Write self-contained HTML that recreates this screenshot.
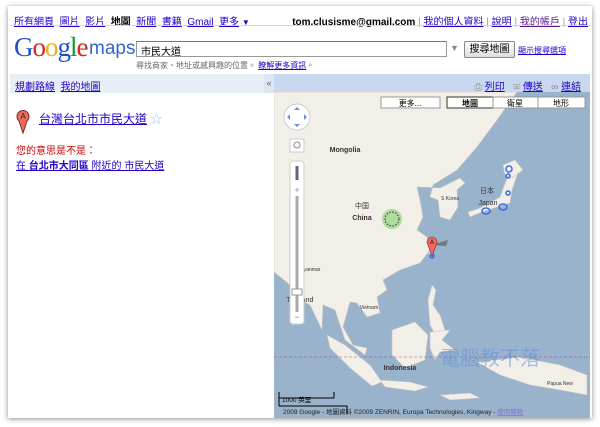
<!DOCTYPE html>
<html><head><meta charset="utf-8"><style>
*{margin:0;padding:0;box-sizing:border-box}
body{width:600px;height:427px;background:#fff;font-family:"Liberation Sans","Noto Sans CJK TC",sans-serif;position:relative;overflow:hidden}
#frame{position:absolute;left:8px;top:6px;width:584px;height:412px;background:#fff;box-shadow:0 1px 5px rgba(0,0,0,.45)}
a{color:#2200cc;text-decoration:underline}
.abs{position:absolute;white-space:nowrap}
.s{font-size:10px}
</style></head><body>
<div id="frame"></div>
<div class="abs s" style="left:14px;top:13px;">
<a>所有網頁</a>&nbsp; <a>圖片</a>&nbsp; <a>影片</a>&nbsp; <b>地圖</b>&nbsp; <a>新聞</a>&nbsp; <a>書籍</a>&nbsp; <a>Gmail</a>&nbsp; <a>更多</a> <span style="color:#2200cc;font-size:8px">▼</span></div>
<div class="abs s" style="right:12px;top:13px;"><b>tom.clusisme@gmail.com</b> <span style="color:#999">|</span> <a>我的個人資料</a> <span style="color:#999">|</span> <a>說明</a> <span style="color:#999">|</span> <a style="color:#551a8b">我的帳戶</a> <span style="color:#999">|</span> <a>登出</a></div>
<div class="abs" style="left:10px;top:25px;width:580px;height:1px;background:#c9d7f1"></div>
<div class="abs" style="left:14px;top:32px;font-family:'Liberation Serif',serif;font-size:27px;letter-spacing:-1px"><span style="color:#1a4fd6">G</span><span style="color:#d8261b">o</span><span style="color:#f1b01a">o</span><span style="color:#1a4fd6">g</span><span style="color:#139a35">l</span><span style="color:#d8261b">e</span></div>
<div class="abs" style="left:89px;top:38px;font-size:19px;color:#3366cc">maps</div>
<div class="abs" style="left:136px;top:41px;width:311px;height:16px;border:1px solid #999;border-top-color:#777;font-size:10px;padding:1px 4px">市民大道</div>
<div class="abs" style="left:450px;top:43px;font-size:9px;color:#888">▼</div>
<div class="abs" style="left:464px;top:41px;width:51px;height:17px;border:1px solid #888;background:linear-gradient(#fff,#ddd);font-size:10px;text-align:center;line-height:15px;border-radius:2px">搜尋地圖</div>
<div class="abs" style="left:518px;top:45px;font-size:8px"><a>顯示搜尋選項</a></div>
<div class="abs" style="left:136px;top:60px;font-size:8px;color:#666">尋找商家、地址或感興趣的位置。 <a>瞭解更多資訊</a>。</div>
<div class="abs" style="left:10px;top:74px;width:264px;height:19px;background:#e8eef8"></div>
<div class="abs" style="left:264px;top:74px;width:10px;height:19px;background:#dde6f4;font-size:9px;color:#666;line-height:18px;text-align:center">«</div>
<div class="abs" style="left:274px;top:74px;width:316px;height:18px;background:#c9d8ee"></div>
<div class="abs s" style="left:15px;top:78px"><a>規劃路線</a>&nbsp; <a>我的地圖</a></div>
<div class="abs s" style="left:474px;top:78px"><span style="color:#888">⎙</span> <a>列印</a>&nbsp;&nbsp; <span style="color:#888">✉</span> <a>傳送</a>&nbsp;&nbsp; <span style="color:#888">∞</span> <a>連結</a></div>
<svg class="abs" style="left:16px;top:108px" width="14" height="26" viewBox="0 0 14 26"><path d="M7 25 L3 13 A6 6 0 1 1 11 13Z" fill="#f06a5c" stroke="#7a2a22" stroke-width="1"/><text x="7" y="11" font-size="8" text-anchor="middle" fill="#222" font-family="Liberation Sans">A</text></svg>
<div class="abs" style="left:39px;top:110px;font-size:12px"><a>台灣台北市市民大道</a> <span style="color:#9bc2ec">☆</span></div>
<div class="abs s" style="left:16px;top:142px;color:#cc0000">您的意思是不是：</div>
<div class="abs s" style="left:16px;top:157px"><a>在 <b>台北市大同區</b> 附近的 市民大道</a></div>
<svg class="abs" style="left:274px;top:92px" width="316" height="326" viewBox="274 92 316 326">
<rect x="274" y="92" width="316" height="326" fill="#99b3cc"/>
<g fill="#f2efe9" stroke="#c8c4bc" stroke-width="0.6">
<path d="M274 92 L517 92 L497 120 L477 147 L457 170 L433 185 L430 197 L438 200 L440 217 L450 220 L458 207 L457 190 L465 183 L460 178 L440 188 L417 187 L420 200 L423 217 L417 230 L427 237 L430 250 L420 263 L400 270 L383 280 L387 290 L377 297 L380 313 L367 317 L357 303 L350 302 L343 327 L353 345 L367 348 L365 355 L345 340 L335 310 L323 305 L322 330 L310 305 L300 300 L290 285 L274 272Z"/>
<path d="M470 217 L482 212 L510 203 L512 190 L520 167 L510 170 L500 197 L480 208 L468 212Z"/>
<path d="M503 165 L515 160 L523 170 L512 178 L505 175Z"/>
<path d="M431 243 L434 246 L432 258 L429 254Z"/>
<path d="M432 285 L436 290 L433 305 L440 315 L445 330 L438 340 L430 325 L428 300Z"/>
<path d="M392 330 L415 322 L428 335 L425 360 L405 368 L392 355Z"/>
<path d="M327 335 L345 345 L370 365 L382 382 L372 386 L350 368 L330 348Z"/>
<path d="M380 380 L410 382 L428 387 L415 391 L385 387Z"/>
<path d="M430 332 L450 330 L442 340 L455 350 L440 352 L435 360 L430 348Z"/>
<path d="M477 362 L520 357 L560 365 L587 375 L587 395 L560 390 L530 385 L500 375Z"/>
<path d="M440 395 L470 393 L480 398 L450 400Z"/>
</g>
<line x1="274" y1="357" x2="590" y2="357" stroke="#a48" stroke-dasharray="3,2" stroke-width="0.6"/>
<circle cx="392" cy="219" r="10" fill="#9ed68c" opacity=".8"/><circle cx="392" cy="219" r="7" fill="none" stroke="#333" stroke-dasharray="1.5,1.5"/>
<path d="M430 245 L448 240 L446 246 Z" fill="#555" opacity=".6"/>
<path d="M432 257 L428 245 A5 5 0 1 1 436 245Z" fill="#f06a5c" stroke="#7a2a22" stroke-width=".6"/><text x="432" y="244" font-size="6" text-anchor="middle" font-family="Liberation Sans">A</text>
<g fill="none" stroke="#3c6ce8" stroke-width="1.5"><circle cx="509" cy="169" r="3"/><circle cx="508" cy="176" r="2"/><circle cx="508" cy="193" r="2"/><ellipse cx="486" cy="211" rx="4" ry="3"/><ellipse cx="503" cy="207" rx="4" ry="3"/><circle cx="432" cy="256" r="2"/></g>
<g font-family="Liberation Sans" font-size="7" font-weight="bold" fill="#333" text-anchor="middle"><text x="345" y="152">Mongolia</text><text x="362" y="220">China</text><text x="488" y="205" font-weight="normal">Japan</text><text x="400" y="370">Indonesia</text><text x="300" y="302" font-weight="normal">Thailand</text></g>
<g font-family="Liberation Sans,Noto Sans CJK TC" font-size="7" fill="#333" text-anchor="middle"><text x="362" y="208">中国</text><text x="487" y="193">日本</text><text x="450" y="200" font-size="5">S Korea</text><text x="310" y="271" font-size="5">Myanmar</text><text x="560" y="385" font-size="5">Papua New</text><text x="369" y="309" font-size="5">Vietnam</text></g>
<g fill="#fff" stroke="#999"><rect x="381" y="97" width="59" height="11"/><rect x="447" y="97" width="46" height="11" stroke="#333"/><rect x="493" y="97" width="45" height="11"/><rect x="538" y="97" width="47" height="11"/></g>
<g font-family="Liberation Sans,Noto Sans CJK TC" font-size="8" text-anchor="middle" fill="#000"><text x="410" y="106">更多...</text><text x="470" y="106" font-weight="bold">地圖</text><text x="515" y="106">衛星</text><text x="561" y="106">地形</text></g>
<circle cx="297" cy="117" r="13" fill="#fff" stroke="#ccc"/>
<path d="M297 107 l-3 3 h6z M297 127 l-3 -3 h6z M287 117 l3 -3 v6z M307 117 l-3 -3 v6z" fill="#6d8ee0"/>
<rect x="290" y="139" width="14" height="13" fill="#fff" stroke="#ccc"/><circle cx="297" cy="145" r="3" fill="none" stroke="#888"/>
<rect x="290" y="161" width="14" height="163" rx="3" fill="#fff" stroke="#ccc"/>
<line x1="297" y1="196" x2="297" y2="312" stroke="#aaa" stroke-width="3"/>
<rect x="292" y="289" width="10" height="6" fill="#fff" stroke="#999"/>
<text x="297" y="193" font-size="9" text-anchor="middle" fill="#6d8ee0">+</text><text x="297" y="320" font-size="9" text-anchor="middle" fill="#6d8ee0">−</text>
<path d="M297 166 v14" stroke="#667" stroke-width="3"/>
<path d="M279 398 h55 M279 392 v14 M334 392 v6 M279 406 h68 v8" stroke="#000" fill="none"/>
<text x="282" y="402" font-size="6.5" font-family="Liberation Sans,Noto Sans CJK TC">1000 英里</text>
<text x="283" y="414" font-size="6.5" font-family="Liberation Sans,Noto Sans CJK TC" fill="#222">2009 Google - 地圖資料 ©2009 ZENRIN, Europa Technologies, Kingway - <tspan fill="#77c" text-decoration="underline">使用條款</tspan></text>
<text x="490" y="365" font-size="20" fill="#5a8fd8" opacity=".5" font-family="Noto Sans CJK TC" text-anchor="middle">電腦教不落</text>
</svg>
</body></html>
